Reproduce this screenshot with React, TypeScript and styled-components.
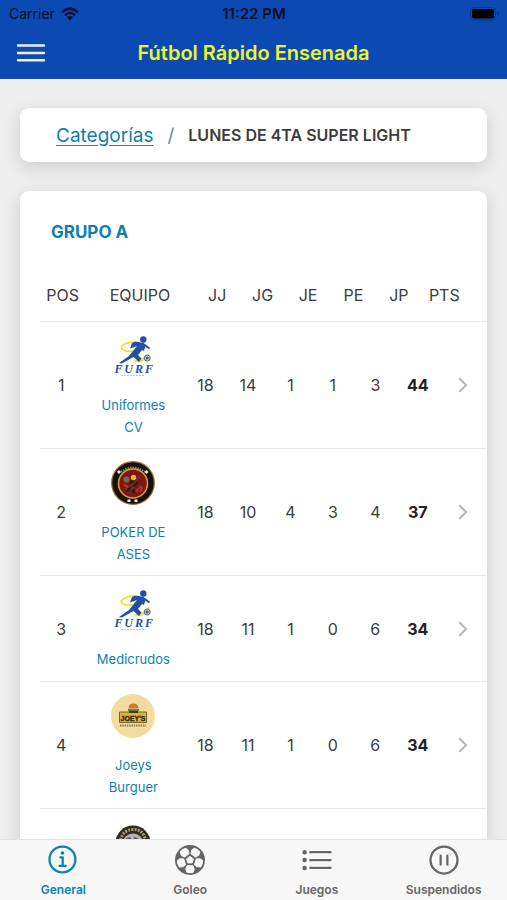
import React from 'react';
import styled, { createGlobalStyle, css } from 'styled-components';
import {
  IoInformationCircleOutline,
  IoListOutline,
  IoPauseCircleOutline,
  IoChevronForwardOutline,
} from 'react-icons/io5';

const blue = '#0d7fb2';

const GlobalStyle = createGlobalStyle`
  * { box-sizing: border-box; }
  body {
    margin: 0;
    background: #eeeeee;
    font-family: Inter, Roboto, "Liberation Sans", sans-serif;
    color: #3c3c3c;
  }
  button { font: inherit; border: 0; background: none; padding: 0; cursor: pointer; }
`;

const Screen = styled.div`
  display: flex;
  flex-direction: column;
  height: 100vh;
`;

const Header = styled.header`
  flex: none;
  background: #0c49b3;
`;

const StatusBar = styled.div`
  display: grid;
  grid-template-columns: 1fr auto 1fr;
  align-items: center;
  height: 27px;
  padding: 0 8px 0 9px;
  font-size: 14px;
  color: #06102a;
`;

const Carrier = styled.span`
  display: flex;
  align-items: center;
  gap: 6px;
`;

const Clock = styled.span`
  font-size: 15px;
  font-weight: 600;
`;

const Battery = styled.svg`
  justify-self: end;
`;

const Toolbar = styled.div`
  display: grid;
  grid-template-columns: 64px 1fr 64px;
  align-items: center;
  height: 52px;
`;

const MenuButton = styled.button`
  display: flex;
  padding-left: 16px;
`;

const Title = styled.h1`
  margin: 0;
  text-align: center;
  font-size: 20px;
  font-weight: 600;
  line-height: 24px;
  color: #ecf62b;
  white-space: nowrap;
`;

const Content = styled.main`
  flex: 1;
  min-height: 0;
  overflow-y: auto;
  scrollbar-width: none;
  display: flex;
  flex-direction: column;
  gap: 29px;
  padding: 29px 20px;
`;

const card = css`
  flex: none;
  background: #fff;
  border-radius: 9px;
  box-shadow: 0 5px 18px rgba(0, 0, 0, 0.14);
`;

const Breadcrumb = styled.nav`
  ${card}
  display: flex;
  align-items: center;
  height: 54px;
  padding: 0 36px;
`;

const CrumbLink = styled.a`
  font-size: 19px;
  color: ${blue};
  text-underline-offset: 3px;
`;

const Slash = styled.span`
  margin: 0 14px;
  font-size: 19px;
  color: #73849a;
`;

const Current = styled.span`
  font-size: 16px;
  font-weight: 600;
  white-space: nowrap;
`;

const Group = styled.section`
  ${card}
  padding-left: 20px;
`;

const GroupTitle = styled.h2`
  margin: 0;
  padding: 29px 11px 0;
  font-size: 17px;
  font-weight: 700;
  line-height: 24px;
  color: ${blue};
`;

const Table = styled.table`
  display: block;
  margin-top: 24px;
`;

const TableHead = styled.thead`
  display: block;
`;

const TableBody = styled.tbody`
  display: block;
`;

const rowGrid = css`
  display: grid;
  align-items: center;
  border-bottom: 1px solid #e6e6e6;
`;

const HeadRow = styled.tr`
  ${rowGrid}
  grid-template-columns: 1fr 2.4fr repeat(6, 1fr);
  height: 54px;
  padding-right: 20px;
`;

const HeadCell = styled.th`
  padding: 0;
  font-size: 16px;
  font-weight: 400;
  text-align: center;
`;

const Row = styled.tr`
  ${rowGrid}
  grid-template-columns: 1fr 2.4fr repeat(6, 1fr) 48px;
  min-height: 106px;
`;

const Cell = styled.td<{ $strong?: boolean }>`
  padding: 0;
  font-size: 16px;
  font-weight: ${(p) => (p.$strong ? 700 : 400)};
  color: ${(p) => (p.$strong ? '#222' : '#3c3c3c')};
  text-align: center;
`;

const TeamCell = styled.td`
  align-self: start;
  padding: 12px 11px 10px;
`;

const TeamLink = styled.a`
  display: flex;
  flex-direction: column;
  align-items: center;
  gap: 16px;
  font-size: 13px;
  line-height: 22px;
  text-align: center;
  color: ${blue};
  text-decoration: none;
`;

const DetailButton = styled.button`
  display: flex;
  margin: 0 auto;
  color: #b8b8b8;
`;

const TabBar = styled.nav`
  flex: none;
  display: grid;
  grid-template-columns: repeat(4, 1fr);
  height: 61px;
  border-top: 1px solid #e2e2e2;
  background: #f7f7f7;
`;

const Tab = styled.button<{ $active?: boolean }>`
  display: flex;
  flex-direction: column;
  align-items: center;
  justify-content: center;
  gap: 4px;
  color: ${(p) => (p.$active ? blue : '#656565')};
`;

const TabLabel = styled.span`
  font-size: 12px;
  line-height: 16px;
  font-weight: 600;
`;

const WifiIcon = () => (
  <svg width="18" height="14" viewBox="0 0 18 14" fill="none" stroke="currentColor" aria-hidden="true">
    <path d="M1.1 5.3Q9-2 16.9 5.3" strokeWidth="2.4" />
    <path d="M3.9 8.3Q9 3.5 14.1 8.3" strokeWidth="2.3" />
    <path d="M9 13.4 5.9 10.2Q9 7.6 12.1 10.2Z" fill="currentColor" stroke="none" />
  </svg>
);

const BatteryIcon = () => (
  <Battery width="29" height="14" viewBox="0 0 29 14" role="img" aria-label="Batería">
    <rect x="0.5" y="0.5" width="25" height="12.5" rx="3.5" fill="none" stroke="#0a3788" />
    <rect x="2" y="2" width="22" height="9.5" rx="2" fill="#000" />
    <path d="M27 4.500q2 .6 2 2t-2 2z" fill="#0a3788" />
  </Battery>
);

const MenuIcon = () => (
  <svg width="30" height="20" viewBox="0 0 30 20" stroke="#e9f1ff" strokeWidth="2.4" strokeLinecap="round" aria-hidden="true">
    <path d="M2 2.500H28M2 10H28M2 17.300H28" />
  </svg>
);

const BallIcon = () => (
  <svg width="36" height="36" viewBox="-18 -18 36 36" fill="#f7f7f7" stroke="#f7f7f7" strokeWidth="1" strokeLinejoin="round" aria-hidden="true">
    <circle r="15" fill="currentColor" stroke="none" />
    <path d="M0-3.600 3.400-1.100 2.100 2.900H-2.100L-3.400-1.100Z" />
    {[0, 72, 144, 216, 288].map((angle) => (
      <path key={angle} transform={`rotate(${angle})`} d="M-2.900 5.700H2.900L4.200 9 3.300 12.200Q0 13.300-3.300 12.200L-4.200 9Z" />
    ))}
  </svg>
);

const FurfLogo = () => (
  <svg width="44" height="44" viewBox="0 0 44 44" role="img" aria-label="FURF">
    <path d="M25 8C13 8 7 13 12 16c6 3 19 1 25-4" fill="none" stroke="#f2e03a" strokeWidth="1.800" />
    <path d="M22 26c8 0 14-3 17-9-1 7-5 12-14 11Z" fill="#f5e52f" />
    <circle cx="32.300" cy="5.500" r="3.200" fill="#2450a4" />
    <path d="M21 9C25 6.500 31 8 34.500 11l-1.500 6-2-1-4 5 3.500 3.500-2.500 3.500-5.500-5L11 29.500l-3-.5 10-7 8-10-7 2.500Z" fill="#2450a4" />
    <path d="m31 9 7.500 5.500" stroke="#2450a4" strokeWidth="1.800" />
    <circle cx="36.200" cy="24" r="3" fill="#d5dcb4" stroke="#46639a" strokeWidth="1" />
    <path d="m36.200 22.200 1.700 1.300-.7 2h-2l-.7-2Z" fill="#46639a" />
    <text y="39" textAnchor="middle" fontFamily="Liberation Serif, serif" fontSize="12" fontWeight="700" fontStyle="italic" fill="#2450a4">
      <tspan x="7.500">F</tspan><tspan x="17.500">U</tspan><tspan x="28">R</tspan><tspan x="38">F</tspan>
    </text>
    <path d="M10 41.500H34" stroke="#bcc3d1" strokeWidth="1" strokeDasharray="2 1" />
  </svg>
);

const PokerLogo = () => (
  <svg width="44" height="44" viewBox="0 0 44 44" role="img" aria-label="Escudo de Poker de Ases">
    <circle cx="22" cy="22" r="21.300" fill="#15110e" stroke="#9c7132" strokeWidth="1.200" />
    <path d="M10 11Q22 2 34 11" fill="none" stroke="#8d857a" strokeWidth="2" strokeDasharray="1.500 1" />
    <circle cx="22" cy="22.500" r="14.500" fill="#7e1712" stroke="#dca135" strokeWidth="1.500" />
    <path d="m19 20 5-4 3 6-4 6 2 5-6-3-5 2 4-6Z" fill="#3b1512" />
    <path d="m14 28 8-5 7-8M18 32l4-6 5 3" fill="none" stroke="#6d302a" strokeWidth="2" />
    <path d="m28 25 3 2-2 4M13 24l4 2M25 31l3-4" stroke="#b93224" strokeWidth="2" fill="none" />
    <circle cx="22.500" cy="16.500" r="2.700" fill="#e5b43c" />
    <circle cx="15.500" cy="18.500" r="3" fill="#756a4d" />
    <path d="m8 9 2 2-2 2-2-2ZM35.500 9l2 2-2 2-2-2ZM16.500 38.500h3v2.500h-3ZM23.500 38.500h3v2.500h-3Z" fill="#f2eee5" />
  </svg>
);

const JoeysLogo = () => (
  <svg width="44" height="44" viewBox="0 0 44 44" role="img" aria-label="Escudo de Joeys Burguer">
    <circle cx="22" cy="22" r="22" fill="#f3dc9f" />
    <path d="M8.500 18h27v10.500h-27Z" fill="#dfb13a" stroke="#74602f" strokeWidth="1" />
    <path d="M17.500 14.500q0-5 5-5t5 5Z" fill="#ce7934" />
    <path d="M17 15h11v2H17Z" fill="#598a38" />
    <path d="M18 17h9v2h-9Z" fill="#5b2a18" />
    <text x="22" y="26.500" textAnchor="middle" fontFamily="Liberation Sans, sans-serif" fontSize="7" fontWeight="700" fill="#30250f" stroke="#30250f" strokeWidth=".3">JOEY'S</text>
    <path d="M9 31.500H35" stroke="#8b7d59" strokeWidth="2" strokeDasharray="1.500 .8" />
  </svg>
);

const SkullLogo = () => (
  <svg width="44" height="44" viewBox="0 0 44 44" role="img" aria-label="Escudo">
    <circle cx="22" cy="22" r="17.500" fill="#2d2a27" />
    <path d="M9.500 19Q12 9 22 8.500T34.500 19" fill="none" stroke="#a69b76" strokeWidth="3" strokeDasharray="2 1.200" />
    <circle cx="22" cy="23" r="10.500" fill="#b4b1b3" />
    <path d="m15 17 4-1 2 3 3-3 4 2 2 4H14Z" fill="#605c61" />
  </svg>
);

type Team = {
  pos: number | null;
  name: string;
  Logo: React.ComponentType;
  stats: number[];
  points: number | null;
};

const teams: Team[] = [
  { pos: 1, name: 'Uniformes CV', Logo: FurfLogo, stats: [18, 14, 1, 1, 3], points: 44 },
  { pos: 2, name: 'POKER DE ASES', Logo: PokerLogo, stats: [18, 10, 4, 3, 4], points: 37 },
  { pos: 3, name: 'Medicrudos', Logo: FurfLogo, stats: [18, 11, 1, 0, 6], points: 34 },
  { pos: 4, name: 'Joeys Burguer', Logo: JoeysLogo, stats: [18, 11, 1, 0, 6], points: 34 },
  { pos: null, name: '', Logo: SkullLogo, stats: [], points: null },
];

const columns = ['POS', 'EQUIPO', 'JJ', 'JG', 'JE', 'PE', 'JP', 'PTS'];

const tabs = [
  { label: 'General', icon: <IoInformationCircleOutline size={36} /> },
  { label: 'Goleo', icon: <BallIcon /> },
  { label: 'Juegos', icon: <IoListOutline size={36} /> },
  { label: 'Suspendidos', icon: <IoPauseCircleOutline size={36} /> },
];

const TeamRow = ({ team }: { team: Team }) => (
  <Row>
    <Cell>{team.pos}</Cell>
    <TeamCell>
      <TeamLink href="#equipo">
        <team.Logo />
        {team.name && <span>{team.name}</span>}
      </TeamLink>
    </TeamCell>
    {team.stats.map((value, i) => (
      <Cell key={i}>{value}</Cell>
    ))}
    {team.points !== null && (
      <>
        <Cell $strong>{team.points}</Cell>
        <Cell>
          <DetailButton type="button" aria-label={`Ver ${team.name}`}>
            <IoChevronForwardOutline size={22} />
          </DetailButton>
        </Cell>
      </>
    )}
  </Row>
);

export default function App() {
  return (
    <Screen>
      <GlobalStyle />
      <Header>
        <StatusBar>
          <Carrier>
            Carrier
            <WifiIcon />
          </Carrier>
          <Clock>11:22 PM</Clock>
          <BatteryIcon />
        </StatusBar>
        <Toolbar>
          <MenuButton type="button" aria-label="Menú">
            <MenuIcon />
          </MenuButton>
          <Title>Fútbol Rápido Ensenada</Title>
        </Toolbar>
      </Header>
      <Content>
        <Breadcrumb aria-label="Ruta">
          <CrumbLink href="#categorias">Categorías</CrumbLink>
          <Slash>/</Slash>
          <Current aria-current="page">LUNES DE 4TA SUPER LIGHT</Current>
        </Breadcrumb>
        <Group>
          <GroupTitle>GRUPO A</GroupTitle>
          <Table>
            <TableHead>
              <HeadRow>
                {columns.map((name) => (
                  <HeadCell key={name} scope="col">{name}</HeadCell>
                ))}
              </HeadRow>
            </TableHead>
            <TableBody>
              {teams.map((team, i) => (
                <TeamRow key={i} team={team} />
              ))}
            </TableBody>
          </Table>
        </Group>
      </Content>
      <TabBar aria-label="Secciones">
        {tabs.map(({ label, icon }, i) => (
          <Tab key={label} type="button" $active={i === 0}>
            {icon}
            <TabLabel>{label}</TabLabel>
          </Tab>
        ))}
      </TabBar>
    </Screen>
  );
}
